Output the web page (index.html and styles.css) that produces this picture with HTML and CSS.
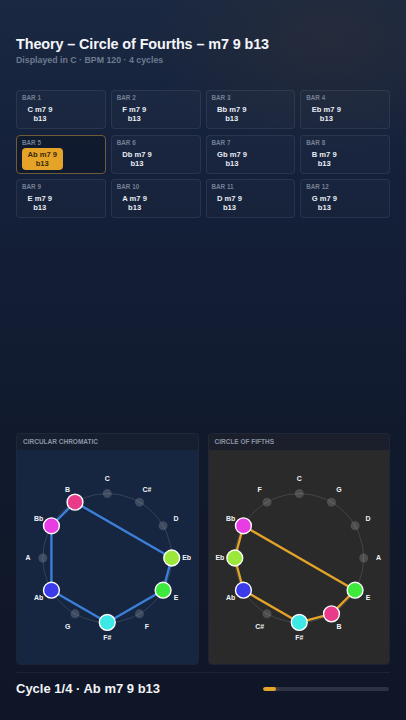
FILE: index.html
```html
<!DOCTYPE html>
<html lang="en">
<head>
<meta charset="utf-8">
<title>Theory – Circle of Fourths</title>
<link rel="stylesheet" href="styles.css">
</head>
<body>
<div class="page">
  <header class="head">
    <h1 class="title">Theory – Circle of Fourths – m7 9 b13</h1>
    <p class="sub">Displayed in C · BPM 120 · 4 cycles</p>
  </header>

  <section class="bars">
    <div class="bar"><span class="bar-label">BAR 1</span><span class="chip">C m7 9<br>b13</span></div>
    <div class="bar"><span class="bar-label">BAR 2</span><span class="chip">F m7 9<br>b13</span></div>
    <div class="bar"><span class="bar-label">BAR 3</span><span class="chip">Bb m7 9<br>b13</span></div>
    <div class="bar"><span class="bar-label">BAR 4</span><span class="chip">Eb m7 9<br>b13</span></div>
    <div class="bar active"><span class="bar-label">BAR 5</span><span class="chip">Ab m7 9<br>b13</span></div>
    <div class="bar"><span class="bar-label">BAR 6</span><span class="chip">Db m7 9<br>b13</span></div>
    <div class="bar"><span class="bar-label">BAR 7</span><span class="chip">Gb m7 9<br>b13</span></div>
    <div class="bar"><span class="bar-label">BAR 8</span><span class="chip">B m7 9<br>b13</span></div>
    <div class="bar"><span class="bar-label">BAR 9</span><span class="chip">E m7 9<br>b13</span></div>
    <div class="bar"><span class="bar-label">BAR 10</span><span class="chip">A m7 9<br>b13</span></div>
    <div class="bar"><span class="bar-label">BAR 11</span><span class="chip">D m7 9<br>b13</span></div>
    <div class="bar"><span class="bar-label">BAR 12</span><span class="chip">G m7 9<br>b13</span></div>
  </section>

  <div class="spacer"></div>

  <section class="panels">
    <div class="panel chromatic">
      <div class="panel-head">CIRCULAR CHROMATIC</div>
      <div class="panel-body">
        <svg class="wheel" viewBox="0 0 182 216" width="182" height="216">
          <circle class="ring" cx="91" cy="108" r="65"/>
          <polygon class="poly blue" points="156,108 147.29,140.5 91,173 34.71,140.5 34.71,75.5 58.5,51.71"/>
          <circle class="dot" cx="91" cy="43" r="4.5"/>
          <circle class="dot" cx="123.5" cy="51.71" r="4.5"/>
          <circle class="dot" cx="147.29" cy="75.5" r="4.5"/>
          <circle class="dot" cx="123.5" cy="164.29" r="4.5"/>
          <circle class="dot" cx="58.5" cy="164.29" r="4.5"/>
          <circle class="dot" cx="26" cy="108" r="4.5"/>
          <circle class="node" cx="156" cy="108" r="8" fill="#9ce83a"/>
          <circle class="node" cx="147.29" cy="140.5" r="8" fill="#3ee83c"/>
          <circle class="node" cx="91" cy="173" r="8" fill="#3ee8e6"/>
          <circle class="node" cx="34.71" cy="140.5" r="8" fill="#3b3bea"/>
          <circle class="node" cx="34.71" cy="75.5" r="8" fill="#e83ce4"/>
          <circle class="node" cx="58.5" cy="51.71" r="8" fill="#ea3a8a"/>
          <text class="lbl" x="91" y="28">C</text>
          <text class="lbl" x="131" y="38.72">C#</text>
          <text class="lbl" x="160.28" y="68">D</text>
          <text class="lbl" x="171" y="108">Eb</text>
          <text class="lbl" x="160.28" y="148">E</text>
          <text class="lbl" x="131" y="177.28">F</text>
          <text class="lbl" x="91" y="188">F#</text>
          <text class="lbl" x="51" y="177.28">G</text>
          <text class="lbl" x="21.72" y="148">Ab</text>
          <text class="lbl" x="11" y="108">A</text>
          <text class="lbl" x="21.72" y="68">Bb</text>
          <text class="lbl" x="51" y="38.72">B</text>
        </svg>
      </div>
    </div>
    <div class="panel fifths">
      <div class="panel-head">CIRCLE OF FIFTHS</div>
      <div class="panel-body">
        <svg class="wheel" viewBox="0 0 182 216" width="182" height="216">
          <circle class="ring" cx="91" cy="108" r="65"/>
          <polygon class="poly gold" points="147.29,140.5 123.5,164.29 91,173 34.71,140.5 26,108 34.71,75.5"/>
          <circle class="dot" cx="91" cy="43" r="4.5"/>
          <circle class="dot" cx="123.5" cy="51.71" r="4.5"/>
          <circle class="dot" cx="147.29" cy="75.5" r="4.5"/>
          <circle class="dot" cx="156" cy="108" r="4.5"/>
          <circle class="dot" cx="58.5" cy="164.29" r="4.5"/>
          <circle class="dot" cx="58.5" cy="51.71" r="4.5"/>
          <circle class="node" cx="147.29" cy="140.5" r="8" fill="#3ee83c"/>
          <circle class="node" cx="123.5" cy="164.29" r="8" fill="#ea3a8a"/>
          <circle class="node" cx="91" cy="173" r="8" fill="#3ee8e6"/>
          <circle class="node" cx="34.71" cy="140.5" r="8" fill="#3b3bea"/>
          <circle class="node" cx="26" cy="108" r="8" fill="#9ce83a"/>
          <circle class="node" cx="34.71" cy="75.5" r="8" fill="#e83ce4"/>
          <text class="lbl" x="91" y="28">C</text>
          <text class="lbl" x="131" y="38.72">G</text>
          <text class="lbl" x="160.28" y="68">D</text>
          <text class="lbl" x="171" y="108">A</text>
          <text class="lbl" x="160.28" y="148">E</text>
          <text class="lbl" x="131" y="177.28">B</text>
          <text class="lbl" x="91" y="188">F#</text>
          <text class="lbl" x="51" y="177.28">C#</text>
          <text class="lbl" x="21.72" y="148">Ab</text>
          <text class="lbl" x="11" y="108">Eb</text>
          <text class="lbl" x="21.72" y="68">Bb</text>
          <text class="lbl" x="51" y="38.72">F</text>
        </svg>
      </div>
    </div>
  </section>

  <footer class="foot">
    <span class="now">Cycle 1/4 · Ab m7 9 b13</span>
    <div class="progress"><div class="fill" style="width: 10%"></div></div>
  </footer>
</div>
</body>
</html>
```

FILE: styles.css
```css
* { box-sizing: border-box; }

html, body {
  margin: 0;
  padding: 0;
}

body {
  width: 406px;
  height: 720px;
  overflow: hidden;
  font-family: "Liberation Sans", Arial, sans-serif;
  color: #eef1f6;
  background:
    radial-gradient(ellipse 260px 160px at 330px 40px, rgba(60, 52, 50, 0.35), rgba(0,0,0,0) 70%),
    linear-gradient(180deg, #1a2841 0%, #14203a 25%, #111a2d 60%, #0f1627 100%);
}

.page {
  height: 720px;
  display: flex;
  flex-direction: column;
  padding: 35px 16px 0 16px;
}

.head { margin: 0; }

.title {
  margin: 0;
  font-size: 14.4px;
  line-height: 18px;
  font-weight: 700;
  letter-spacing: -0.1px;
  color: #f4f6fa;
}

.sub {
  margin: 2px 0 0 0;
  font-size: 8.8px;
  line-height: 11px;
  font-weight: 700;
  color: #6e7a8e;
}

.bars {
  margin-top: 24px;
  display: grid;
  grid-template-columns: repeat(4, 1fr);
  column-gap: 5px;
  row-gap: 5.5px;
}

.bar {
  display: flex;
  flex-direction: column;
  align-items: flex-start;
  gap: 1px;
  padding: 3px 5px 3px 5px;
  border: 1px solid rgba(255, 255, 255, 0.075);
  border-radius: 4px;
  background: rgba(255, 255, 255, 0.018);
}

.bar.active {
  border-color: #6f5b36;
  background: rgba(10, 14, 24, 0.35);
}

.bar-label {
  font-size: 6.3px;
  line-height: 8px;
  font-weight: 700;
  color: #747f93;
}

.chip {
  display: inline-block;
  padding: 2px 5.5px;
  border-radius: 4px;
  text-align: center;
  font-size: 7.6px;
  line-height: 9px;
  font-weight: 700;
  color: #e9edf3;
}

.bar.active .chip {
  background: #e5a427;
  color: #3a2a0c;
}

.spacer { flex: 1; }

.panels {
  display: flex;
  gap: 9px;
  height: 232px;
}

.panel {
  flex: 1;
  display: flex;
  flex-direction: column;
  border: 1px solid rgba(255, 255, 255, 0.06);
  border-radius: 4px;
  overflow: hidden;
}

.panel-head {
  height: 16px;
  padding: 0 6px;
  font-size: 6.5px;
  line-height: 16px;
  font-weight: 700;
  color: #8a93a4;
  background: #161f30;
}

.fifths .panel-head { background: #1a1f2b; }

.panel-body {
  flex: 1;
  display: flex;
  align-items: center;
  justify-content: center;
}

.chromatic .panel-body { background: #172640; }
.fifths .panel-body { background: #2a2a2b; }

.wheel { display: block; }

.ring {
  fill: none;
  stroke: rgba(255, 255, 255, 0.13);
  stroke-width: 1;
}

.poly {
  fill: none;
  stroke-width: 2.4;
  stroke-linejoin: round;
}
.poly.blue { stroke: #3b7fd8; }
.poly.gold { stroke: #e3a228; }

.dot { fill: rgba(255, 255, 255, 0.17); }

.node {
  stroke: #ffffff;
  stroke-width: 1.4;
}

.lbl {
  font-family: "Liberation Sans", Arial, sans-serif;
  font-size: 7px;
  font-weight: 700;
  fill: #f2f4f8;
  text-anchor: middle;
  dominant-baseline: central;
}

.foot {
  margin: 7px 0 0 0;
  padding: 8px 0 23px 0;
  border-top: 1px solid rgba(255, 255, 255, 0.06);
  display: flex;
  align-items: center;
  justify-content: space-between;
}

.now {
  font-size: 13px;
  line-height: 16px;
  font-weight: 700;
  color: #f2f4f8;
}

.progress {
  width: 126px;
  height: 4px;
  margin-right: 1px;
  border-radius: 2px;
  background: rgba(255, 255, 255, 0.12);
  overflow: hidden;
}

.fill {
  height: 100%;
  border-radius: 2px;
  background: #e4a52a;
  box-shadow: 0 0 6px rgba(228, 165, 42, 0.6);
}
```
